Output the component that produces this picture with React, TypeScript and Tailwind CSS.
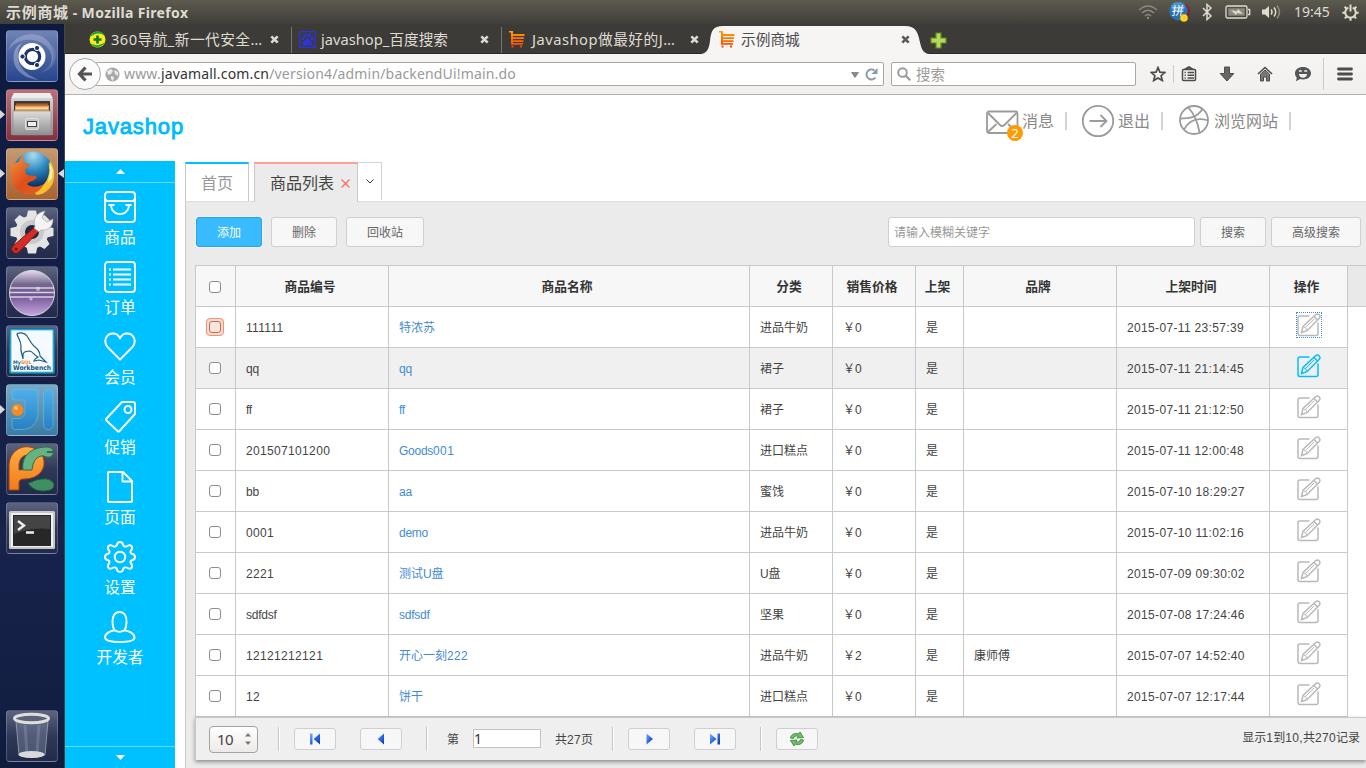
import type { ReactNode } from "react";

const UI = "font-['Noto_Sans','Noto_Sans_CJK_SC',sans-serif]";
const WEB = "font-['Liberation_Sans','Noto_Sans_CJK_SC',sans-serif]";

/* Letters are set a little tighter and digits a little wider than the Chinese beside them. */
function Mixed({ text }: { text: string }) {
  const parts = text.split(/([A-Za-z]+|[\x20-\x40]+)/).filter(Boolean);
  return (
    <>
      {parts.map((p, i) => (
        <span
          key={i}
          className={/^[A-Za-z]/.test(p) ? "tracking-[-0.25px]" : /^[\x20-\x40]/.test(p) ? "tracking-[0.34px]" : ""}
        >
          {p}
        </span>
      ))}
    </>
  );
}

/* ---------- system bar ---------- */

function TopBar() {
  return (
    <div className="flex h-6 shrink-0 items-center justify-between bg-linear-to-b from-[#5d5a4f] to-[#3f3e39] pr-[7px] pl-[6px] text-[#dfdbd2]">
      <span className="text-[15px] leading-6 font-bold whitespace-nowrap">
        <span className="tracking-[0.7px]">示例商城</span>
        <span className="text-[14px] tracking-[0.35px]"> - Mozilla Firefox</span>
      </span>
      <div className="flex items-center">
        <svg width="20" height="16" viewBox="0 0 20 16" fill="none" stroke="#8d8a81" strokeWidth="1.6">
          <path d="M1 6Q10-2 19 6M4 9Q10 3.5 16 9M7 12Q10 9 13 12" />
          <circle cx="10" cy="14" r="1.2" fill="#8d8a81" stroke="none" />
        </svg>
        <svg className="ml-[11px]" width="22" height="22" viewBox="0 0 22 22">
          <circle cx="14" cy="10" r="7" fill="#9a1525" />
          <circle cx="9.5" cy="10" r="9.3" fill="#2872ad" />
          <ellipse cx="9" cy="6" rx="7" ry="5" fill="#4a92c8" />
          <text x="3" y="14.5" fontSize="12" fill="#fff" fontFamily="Noto Sans CJK SC" transform="skewX(-6) translate(1 0)">拼</text>
          <circle cx="15" cy="17" r="3.8" fill="#ffd21f" />
        </svg>
        <svg className="ml-[10px]" width="12" height="18" viewBox="0 0 12 18" fill="none" stroke="#dfdbd2" strokeWidth="1.5">
          <path d="M2 5L10 13L6 16.5V1.5L10 5L2 13" />
        </svg>
        <svg className="ml-3" width="26" height="14" viewBox="0 0 26 14" fill="none" stroke="#dfdbd2" strokeWidth="1.3">
          <rect x="1" y="1" width="21" height="12" rx="1.5" />
          <path d="M23 4.5h1.7v5H23" />
          <rect x="3.3" y="3.3" width="16.4" height="7.4" fill="#8d8a81" stroke="none" />
          <path d="M6 5l6 1.5L13 4l5 5-6-1-1 2z" fill="#dfdbd2" stroke="none" />
        </svg>
        <svg className="ml-[10px]" width="21" height="16" viewBox="0 0 21 16" fill="none" stroke="#dfdbd2" strokeWidth="1.5">
          <path d="M1 5.5h3l4-3.5v12L4 10.500H1z" fill="#dfdbd2" stroke="none" />
          <path d="M10 5.500q2 2.500 0 5M13 3.500q3.500 4.500 0 9" />
          <path d="M16 1.500q5 6.500 0 13" stroke="#8d8a81" />
        </svg>
        <span className="ml-[12px] w-9 text-[14px] leading-6 whitespace-nowrap">19:45</span>
        <svg className="ml-[12px]" width="17" height="17" viewBox="0 0 17 17" fill="none" stroke="#dfdbd2" strokeWidth="2">
          <path d="M6.300 3.600a5.300 5.300 0 1 0 4.400 0" />
          <path d="M8.500 .500v7M.3 8.700h3M13.700 8.700h3M8.500 13.700v3M2.600 2.800L4.600 4.800M14.400 2.800L12.400 4.800M2.800 14.400L5 12.200M14.200 14.400L12 12.200" />
        </svg>
      </div>
    </div>
  );
}

/* ---------- launcher ---------- */

function Tile({ tone, children, left, right }: { tone: string; children: ReactNode; left?: boolean; right?: boolean }) {
  return (
    <div className="relative flex w-full justify-center pr-px">
      {left && (
        <svg className="absolute top-[21px] left-0" width="5" height="9" viewBox="0 0 5 9">
          <path d="M0 0l5 4.500L0 9z" fill="#d8d8d8" />
        </svg>
      )}
      <div className={"flex size-[52px] items-center justify-center rounded-[4px] border border-white/20 " + tone}>
        <svg width="50" height="50" viewBox="0 0 50 50" className="shrink-0">
          {children}
        </svg>
      </div>
      {right && (
        <svg className="absolute top-[21px] right-0" width="6" height="9" viewBox="0 0 6 9">
          <path d="M6 0L0 4.500L6 9z" fill="#d8d8d8" />
        </svg>
      )}
    </div>
  );
}

const glass = "bg-linear-to-b from-[#5d6480] via-[#2f3858] to-[#222b4c]";

function Launcher() {
  return (
    <div className="flex w-[65px] shrink-0 flex-col gap-[7px] border-r border-[#4a4540] bg-linear-to-b from-[#0d1a40] via-[#18234c] via-70% to-[#101c3e] pt-[6px]">
      <Tile tone="bg-linear-to-b from-[#7183b5] to-[#26458c]">
        <path d="M1 20C8 8 28 4 40 16c7 8 5 16 2 22 8-12 5-27-8-33C21 0 5 6 1 20z" fill="#fff" fillOpacity=".22" />
        <path d="M7 22C4 36 14 47 32 49 20 44 10 36 11 24c0-6 2-10 5-12-4 1-8 5-9 10z" fill="#fff" fillOpacity=".3" />
        <path d="M44 12c5 12 0 26-12 30 10-1 18-9 17-18 0-5-2-9-5-12z" fill="#fff" fillOpacity=".12" />
        <circle cx="25" cy="25.500" r="13.500" fill="#fff" />
        <circle cx="25.500" cy="25.500" r="7.200" fill="none" stroke="#1f3566" strokeWidth="3.200" />
        <g fill="#1f3566" stroke="#fff" strokeWidth="1">
          <circle cx="15.500" cy="25.500" r="2.600" />
          <circle cx="30" cy="17" r="2.600" />
          <circle cx="30" cy="34" r="2.600" />
        </g>
      </Tile>
      <Tile left tone="bg-linear-to-b from-[#b8737c] to-[#832f3e]">
        <defs>
          <linearGradient id="cab" x1="0" y1="0" x2="0" y2="1">
            <stop offset="0" stopColor="#dcdcdc" />
            <stop offset="1" stopColor="#8f8f8f" />
          </linearGradient>
        </defs>
        <path d="M7 3h36l3 6v36H4V9z" fill="url(#cab)" />
        <path d="M7 3h36l2.500 5h-41z" fill="#ededed" />
        <rect x="7" y="11" width="36" height="11" fill="#3b3a38" />
        <path d="M9 13.500h32v2H9z" fill="#b75b2b" />
        <path d="M8 15.500h34v6H8z" fill="#ef9c4b" />
        <path d="M9 17.500h32v1.300H9z" fill="#fff4d8" />
        <path d="M6 21h38v24H6z" fill="url(#cab)" stroke="#8a8a8a" strokeWidth=".6" />
        <rect x="18.500" y="28.500" width="13" height="11" rx="1.500" fill="#c6c6c6" stroke="#dedede" />
        <rect x="20.500" y="31.500" width="9" height="5" fill="#eee" stroke="#444" />
      </Tile>
      <Tile left right tone="bg-linear-to-b from-[#c69a72] to-[#a96330]">
        <defs>
          <radialGradient id="globe" cx=".5" cy=".1" r=".8">
            <stop offset="0" stopColor="#a9ddf3" />
            <stop offset=".5" stopColor="#2c87bd" />
            <stop offset="1" stopColor="#0b2f62" />
          </radialGradient>
          <linearGradient id="fox" x1="0" y1="0" x2=".8" y2="1">
            <stop offset="0" stopColor="#f3933a" />
            <stop offset=".6" stopColor="#df4e1b" />
            <stop offset="1" stopColor="#e0601c" />
          </linearGradient>
        </defs>
        <circle cx="26" cy="22" r="19.500" fill="url(#globe)" />
        <path d="M40 9c3 8 3 14 1 19-3 9-10 13-17 13l6 5c9-1 16-8 17-17 1-7-1-13-4-17l0 6z" fill="#f9c22d" />
        <path d="M42 13l1 9-2 12 4-5 1-8z" fill="#fff0a0" />
        <path d="M5 9c0 3 0 5 1 7 2-2 4-3 6-3 0-3 3-6 6-6-2 3-2 5-1 7l6 1c-1 3-5 4-5 6l1 4c3 3 8 0 11 3-2 4-8 4-10 7 4 4 12 3 17 0-4 8-12 12-20 10C9 42 3 33 4 22c0-5 0-9 1-13z" fill="url(#fox)" />
      </Tile>
      <Tile tone={glass}>
        <g fill="#e4e4e4">
          <circle cx="25" cy="24" r="16.500" />
          <path d="M21 2.500h8l1.500 7h-11zM21 45.500h8l1.500-7h-11zM3.500 20v8l7 1.500v-11zM46.500 20v8l-7 1.500v-11zM7.500 12l5-5 7 4-8 8zM37.500 7l5 5-4 7-8-8zM7.500 36l5 5 7-4-8-8zM37.500 41l5-5-4-7-8 8z" />
        </g>
        <circle cx="25" cy="24" r="12" fill="#c9cacc" />
        <circle cx="25" cy="24" r="7" fill="#1e2744" />
        <path d="M29 18l4 4L12 44q-3 3-6 0t0-6z" fill="#d52c25" stroke="#86150f" />
        <path d="M28 18.500c-3-8 2-14 10-15.500l-3 7 5 4 6-3c0 8-5 12-12 11l-2 2-5-4z" fill="#f4f4f4" stroke="#a5a5a5" strokeWidth=".7" />
        <circle cx="9" cy="41" r="1.500" fill="#6e0f0c" />
      </Tile>
      <Tile tone={glass}>
        <defs>
          <linearGradient id="orb" x1="0" y1="0" x2="0" y2="1">
            <stop offset="0" stopColor="#e6dcee" />
            <stop offset=".3" stopColor="#75688f" />
            <stop offset=".55" stopColor="#6f5593" />
            <stop offset="1" stopColor="#c7a6df" />
          </linearGradient>
        </defs>
        <circle cx="25" cy="26" r="22.500" fill="url(#orb)" stroke="#ddd2e5" />
        <path d="M3 21h44M3 25.500h44M3 30h44" stroke="#d8cee2" strokeWidth="1.400" />
        <circle cx="31" cy="22" r="2.200" fill="#fff" fillOpacity=".4" />
        <circle cx="24" cy="32" r="1.600" fill="#fff" fillOpacity=".5" />
      </Tile>
      <Tile tone={glass}>
        <rect x="2" y="2" width="46" height="46" rx="2" fill="#0878a8" />
        <rect x="4" y="4" width="42" height="42" fill="#f4faff" stroke="#57bfe0" />
        <path d="M16 33c-1-6-3-8-2-13 0-5-3-8-4-12 3-2 8-1 10 2 3 5 5 9 8 11 4 3 5 5 5 9l6 6-7-2-5 1c1-3 3-3 4-4-4-2-5-5-8-6-3 0-6 0-7 3z" fill="#fff" stroke="#1b5f88" strokeWidth="1.200" />
        <text x="6" y="37.500" fontSize="4.800" fontWeight="bold" fill="#16628b" fontFamily="DejaVu Sans">My<tspan fill="#ee8b1d">SQL</tspan></text>
        <text x="6" y="43.500" fontSize="6.600" fontWeight="bold" fill="#16527b" textLength="38" lengthAdjust="spacingAndGlyphs" fontFamily="DejaVu Sans">Workbench</text>
      </Tile>
      <Tile left tone="bg-linear-to-b from-[#79a9c5] to-[#3a7ba5]">
        <defs>
          <linearGradient id="ij" x1="0" y1="0" x2="0" y2="1">
            <stop offset="0" stopColor="#4fb0ea" />
            <stop offset="1" stopColor="#2a7fc2" />
          </linearGradient>
        </defs>
        <path d="M5 4.500h26v22c0 12-6 18-17 18H8q-3 0-3-3V33.500h6c5 0 7-3 7-8V15H8q-3 0-3-3z" fill="url(#ij)" stroke="#62c2f0" strokeWidth=".6" />
        <rect x="36.500" y="4.500" width="9.500" height="40" rx="4.500" fill="url(#ij)" stroke="#62c2f0" strokeWidth=".6" />
        <circle cx="10.500" cy="25" r="6" fill="#f58a22" />
        <circle cx="9" cy="23" r="2" fill="#ffc47c" />
      </Tile>
      <Tile tone={glass}>
        <defs>
          <linearGradient id="snake" x1="0" y1="0" x2="0" y2="1">
            <stop offset="0" stopColor="#ffae42" />
            <stop offset="1" stopColor="#f07b1d" />
          </linearGradient>
        </defs>
        <path d="M21 39c5-1 8-4 14-4 6-1 12 2 12 6 0 5-6 6-11 6-7 0-12-3-15-8z" fill="#3f8f60" stroke="#1d5b3d" />
        <path d="M2 46V20C3 9 12 1 23 3c9 2 15 8 14 18-2 10-11 14-20 14-3 0-5 1-5 4v7z" fill="url(#snake)" stroke="#a9400c" />
        <path d="M12 26V20c1-6 4-9 10-9 5 1 6 6 3 10-3 3-7 5-13 5z" fill="#343c55" stroke="#a9400c" />
        <path d="M16 26C14 12 24 3 40 3c8 0 8 8 3 10-4 1-6-2-9-1-6 2-8 6-9 14z" fill="#67b283" stroke="#2c7049" />
        <path d="M40 8h6" stroke="#1d5b3d" strokeWidth="1.600" />
      </Tile>
      <Tile tone={glass}>
        <rect x="2" y="8" width="46" height="38" rx="1.500" fill="#c7c7c7" />
        <rect x="4" y="10" width="42" height="34" fill="#f0f0f0" />
        <rect x="6" y="12" width="38" height="31" fill="#272727" />
        <path d="M7 13h36v13Q25 24 7 31z" fill="#444" />
        <path d="M11 18l6 4.500-6 4.500M19 29.500h8" fill="none" stroke="#eee" strokeWidth="2.400" />
      </Tile>
      <div className="mt-auto mb-[6px]">
        <Tile tone={glass}>
          <path d="M9 10l3 34q13 5 26 0l3-34z" fill="#8892a8" fillOpacity=".4" stroke="#aab0be" strokeWidth=".7" />
          <path d="M18 14l2 29M32 14l-2 29" stroke="#cfd3dc" strokeOpacity=".2" strokeWidth="3" />
          <ellipse cx="24.500" cy="43.500" rx="13" ry="3.500" fill="#d7d9dc" />
          <ellipse cx="24.500" cy="7.500" rx="17" ry="4.200" fill="#5b6379" stroke="#dededc" strokeWidth="3" />
        </Tile>
      </div>
    </div>
  );
}

/* ---------- browser chrome ---------- */

function CartIcon() {
  return (
    <svg width="16" height="17" viewBox="0 0 16 17" className="shrink-0">
      <defs>
        <linearGradient id="cart" x1="0" y1="0" x2="0" y2="1">
          <stop offset="0" stopColor="#ffa200" />
          <stop offset="1" stopColor="#ff3c00" />
        </linearGradient>
      </defs>
      <path d="M0 0h4v3h11.500v2H4v1.300h11v1.700H4v1.300h10.500V11H4v1h10v1.800H2V1.600H0zM2.500 14.500h2v2h-2zM11 14.500h2v2h-2z" fill="url(#cart)" />
    </svg>
  );
}

function CloseX({ color }: { color: string }) {
  return (
    <svg width="9" height="9" viewBox="0 0 9 9" className="shrink-0">
      <path d="M1.300 1.300l6.400 6.400M7.700 1.300L1.300 7.700" stroke={color} strokeWidth="2.600" />
    </svg>
  );
}

function BrowserTab({ icon, label, width, track }: { icon: ReactNode; label: string; width: string; track: string }) {
  return (
    <div className={"flex h-[30px] items-center pr-3 " + width}>
      {icon}
      <span className={"ml-[5px] flex-1 leading-[30px] whitespace-nowrap text-[#dfdbd2] " + track}>{label}</span>
      <CloseX color="#dcd9d1" />
    </div>
  );
}

function TabStrip() {
  return (
    <div className="flex h-[30px] shrink-0 border-b border-[#2a2926] bg-[#3c3b37]">
      <BrowserTab
        width="w-[226px] pl-6"
        track="text-[14.7px] tracking-[0.45px]"
        label="360导航_新一代安全…"
        icon={
          <svg width="17" height="17" viewBox="0 0 17 17" className="shrink-0">
            <circle cx="8.500" cy="8.500" r="8" fill="#f9ea1d" />
            <path d="M1 6C4-1 13-1 16 5 11 1 6 2 1 6zM16 11c-3 6-11 7-15 1 5 3 10 3 15-1z" fill="#16a536" />
            <path d="M8.500 4.500v8M4.500 8.500h8" stroke="#127322" strokeWidth="2.600" />
          </svg>
        }
      />
      <div className="mt-[3px] h-[26px] w-px bg-[#75736a]" />
      <BrowserTab
        width="w-[209px] pl-[7px]"
        track="text-[14.7px]"
        label="javashop_百度搜索"
        icon={
          <svg width="17" height="17" viewBox="0 0 17 17" className="shrink-0" fill="#2b34dd">
            <rect x=".7" y=".7" width="15.600" height="15.600" fill="none" stroke="#2b34dd" strokeWidth="1.300" />
            <ellipse cx="4" cy="7.500" rx="1.400" ry="1.900" />
            <ellipse cx="6.700" cy="4.500" rx="1.400" ry="2" />
            <ellipse cx="10.300" cy="4.500" rx="1.400" ry="2" />
            <ellipse cx="13" cy="7.500" rx="1.400" ry="1.900" />
            <path d="M8.500 7.500c2 0 2.500 2 4 3.200s1 3.800-1 3.800-2-.5-3-.5-1 .5-3 .5-2.500-2.600-1-3.800 2-3.200 4-3.200z" />
          </svg>
        }
      />
      <div className="mt-[3px] h-[26px] w-px bg-[#75736a]" />
      <BrowserTab width="w-[209px] pl-[7px]" track="pl-[2px] text-[14.7px] tracking-[0.5px]" label="Javashop做最好的J…" icon={<CartIcon />} />
      <div className="relative -ml-[10px] flex h-[30px] w-[229px] shrink-0 items-center pr-[20px] pl-[18px]">
        <svg className="absolute inset-0" width="229" height="30" viewBox="0 0 229 30">
          <path d="M0 30C6 29 8 25 9 17 10 7 12 2 22 2H204C214 2 216 7 218 14 220 23 221 30 229 30z" fill="#f6f5f4" />
        </svg>
        <div className="relative flex flex-1 items-center">
          <CartIcon />
          <span className="ml-[6px] flex-1 text-[14.7px] leading-[30px] text-[#4c4c4c]">示例商城</span>
          <CloseX color="#5d5b57" />
        </div>
      </div>
      <svg className="mt-2" width="17" height="17" viewBox="0 0 17 17">
        <path d="M6 1h5v5h5v5h-5v5H6v-5H1V6h5z" fill="#b6d757" stroke="#618b24" strokeWidth="1.200" />
      </svg>
    </div>
  );
}

function NavBar() {
  return (
    <div className="flex h-[41px] shrink-0 items-center border-b border-[#b2b0ab] bg-linear-to-b from-[#f6f5f4] to-[#f1f0ee] pl-1 text-[15px] text-[#9a9a9a]">
      <div className="z-10 flex size-8 shrink-0 items-center justify-center rounded-full border border-[#a1a8ad] bg-[#fbfbfb]">
        <svg width="16" height="16" viewBox="0 0 16 16" fill="none" stroke="#545454" strokeWidth="3.200">
          <path d="M8.500 1.500L2.500 8l6 6.500M3 8h12" />
        </svg>
      </div>
      <div className="-ml-[6px] flex h-6 w-[789px] items-center rounded-[2px] border border-[#a9a8a4] bg-white pr-[5px] pl-[9px]">
        <svg width="15" height="15" viewBox="0 0 15 15" className="shrink-0">
          <circle cx="7.500" cy="7.500" r="7" fill="#a8a8a8" />
          <path d="M2 4l4-2 2 2-2 3-3 1zM9 3l4 2v4l-3-2zM6 9l3 1-1 4-2-2z" fill="#ececec" />
        </svg>
        <span className="ml-[4px] flex-1 text-[14px] leading-[22px] tracking-[0.17px] whitespace-nowrap">
          www.<span className="text-[#333]">javamall.com.cn</span>/version4/admin/backendUi!main.do
        </span>
        <svg className="mt-[2px]" width="8" height="6" viewBox="0 0 8 6"><path d="M.5.5h7L4 5.500z" fill="#8b8b8b" stroke="#666" strokeWidth=".6" /></svg>
        <svg className="ml-[6px]" width="13" height="13" viewBox="0 0 13 13">
          <path d="M10.500 9.500A5 5 0 1 1 9.500 2.500" fill="none" stroke="#8a99a7" strokeWidth="2" />
          <path d="M12.500 0v6H6.500z" fill="#8a99a7" />
        </svg>
      </div>
      <div className="ml-[7px] flex h-6 w-[245px] items-center rounded-[2px] border border-[#a9a8a4] bg-white pl-[5px]">
        <svg width="14" height="14" viewBox="0 0 14 14" fill="none" stroke="#999" strokeWidth="1.900">
          <circle cx="5.500" cy="5.500" r="4.300" />
          <path d="M8.500 8.500l4.800 4.800" strokeWidth="2.200" />
        </svg>
        <span className="ml-[5px] text-[14.500px] leading-[22px]">搜索</span>
      </div>
      <svg className="ml-[14px]" width="16" height="16" viewBox="0 0 16 16" fill="none" stroke="#4c4c4c" strokeWidth="1.700">
        <path d="M8 1.500l1.900 4.600 4.900.4-3.700 3.200 1.200 4.800L8 11.900l-4.300 2.600 1.200-4.800L1.200 6.500l4.900-.4z" />
      </svg>
      <div className="mx-[7px] h-[18px] w-px bg-[#c9ccd0]" />
      <svg width="16" height="16" viewBox="0 0 16 16" fill="none" stroke="#4c4c4c" strokeWidth="1.500">
        <rect x="1.500" y="3.500" width="13" height="11" rx="1" />
        <path d="M4.500 3L8 .8 11.500 3zM3.500 6.500h1.300M3.500 9.200h1.300M3.500 12h1.300M6.500 6.500h6.500M6.500 9.200h6.500M6.500 12h6.500" />
      </svg>
      <svg className="ml-[22px]" width="16" height="16" viewBox="0 0 16 16"><path d="M5.500 1h5v6.500h4.300L8 15 1.200 7.500h4.300z" fill="#666" stroke="#4c4c4c" /></svg>
      <svg className="ml-[22px]" width="16" height="16" viewBox="0 0 16 16">
        <path d="M1 8L8 1.500 15 8" fill="none" stroke="#4c4c4c" strokeWidth="1.600" />
        <path d="M3.500 8.200L8 4l4.500 4.200V15h-3v-4h-3v4h-3z" fill="#777" stroke="#4c4c4c" />
      </svg>
      <svg className="ml-[21px]" width="18" height="16" viewBox="0 0 18 16">
        <path d="M9 1c4.600 0 8 2.700 8 6.200s-3.400 6.200-8 6.200c-1 0-2-.1-2.800-.4L2 15.200l.8-3.500C1.600 10.500 1 9 1 7.200 1 3.700 4.400 1 9 1z" fill="#555" />
        <path d="M4.800 8h8.400q-.6 3.700-4.200 3.700T4.800 8z" fill="#eee" />
        <path d="M5 5.500q1.300-1.500 2.600 0M10.400 5.500q1.300-1.500 2.600 0" stroke="#eee" fill="none" strokeWidth="1.300" />
      </svg>
      <div className="ml-[11px] h-8 w-px bg-[#c9ccd0]" />
      <svg className="ml-[13px]" width="16" height="14" viewBox="0 0 16 14"><path d="M1.500 2h13M1.500 7h13M1.500 12h13" stroke="#4c4c4c" strokeWidth="2.800" strokeLinecap="round" /></svg>
    </div>
  );
}

/* ---------- page ---------- */

function PageHeader() {
  return (
    <div className="flex h-[66px] shrink-0 items-start bg-white pt-[9px] text-[16px] text-[#888]">
      <span className="mt-[7px] ml-[18px] w-[102px] text-[22px] leading-8 tracking-[0.85px] text-[#00bbfd] [-webkit-text-stroke:0.9px_#00bbfd]">Javashop</span>
      <div className="relative ml-[801px] h-9 w-[33px] pt-[6px]">
        <svg width="33" height="25" viewBox="0 0 33 25" fill="none" stroke="#9b9b9b" strokeWidth="1.800">
          <rect x="1" y="1.500" width="30.500" height="21.500" rx="2" />
          <path d="M2 3L14 15q2.200 2 4.400 0L30.500 3M2 22l8.500-8M30.500 22L22 14" />
        </svg>
        <span className="absolute top-[21px] left-[21px] flex size-4 items-center justify-center rounded-full bg-[#ff9b00] pt-px font-['Noto_Sans'] text-[13px] leading-none text-white">2</span>
      </div>
      <span className="ml-[3px] w-8 leading-[36px]">消息</span>
      <div className="mt-[8px] ml-[11px] h-[18px] w-[2px] bg-[#d4d4d4]" />
      <svg className="ml-[14px]" width="34" height="34" viewBox="0 0 34 34" fill="none" stroke="#9b9b9b" strokeWidth="1.800">
        <circle cx="17" cy="17" r="15.200" />
        <path d="M8.500 17h16.500M19.500 11l6 6-6 6" />
      </svg>
      <span className="ml-[3px] w-8 leading-[36px]">退出</span>
      <div className="mt-[8px] ml-[11px] h-[18px] w-[2px] bg-[#d4d4d4]" />
      <svg className="ml-[15px]" width="32" height="32" viewBox="0 0 32 32" fill="none" stroke="#9b9b9b" strokeWidth="1.800">
        <circle cx="16" cy="16" r="14" />
        <path d="M10.500 3.500C17 11 20 19 21.500 28.500M2 14.500c10 0 17-1 22.500-9.500M6 25.500c5-9 13-12.500 24-9" />
      </svg>
      <span className="ml-[4px] w-16 leading-[36px]">浏览网站</span>
      <div className="mt-[8px] ml-[11px] h-[18px] w-[2px] bg-[#d4d4d4]" />
    </div>
  );
}

const menu: { label: string; icon: ReactNode }[] = [
  {
    label: "商品",
    icon: (
      <>
        <rect x="1" y="1" width="30" height="30" rx="3" />
        <path d="M1 7q0 3 3 3h24q3 0 3-3M4.500 14h6M21.500 14h6M7 14.500c1 11.500 17 11.500 18 0" />
      </>
    ),
  },
  {
    label: "订单",
    icon: (
      <>
        <rect x="1" y="1" width="30" height="30" rx="3" />
        <path d="M9 8.500h18M9 13.500h18M9 18.500h18M9 23.500h18M5 8.500h2M5 13.500h2M5 18.500h2M5 23.500h2" strokeWidth="2" />
      </>
    ),
  },
  { label: "会员", icon: <path d="M16 28.500L3.500 16C-1 10.500 2 2.500 9 2.500c3.500 0 6 2.500 7 5 1-2.500 3.500-5 7-5 7 0 10 8 5.500 13.500z" /> },
  {
    label: "促销",
    icon: (
      <>
        <path d="M18 1h11q2 0 2 2v10L15.500 30q-1 1-2 0L2.500 19.500q-1-1 0-2z" />
        <circle cx="24" cy="8.500" r="3.500" />
      </>
    ),
  },
  { label: "页面", icon: <path d="M4 2q0-1 1-1h14l9 9v20q0 1-1 1H5q-1 0-1-1zM18.500 1v9.500H28" /> },
  {
    label: "设置",
    icon: (
      <>
        <circle cx="16" cy="16" r="5.300" />
        <path d="M12.700 4.500C13 2 14 1 16 1s3 1 3.300 3.500q1.700 1.800 3.600.7c2-1.200 3.500-1.200 4.600 0s1 2.600-.7 4.600q-1 1.900.9 2.900C30 13 31 14 31 16s-1 3-3.300 3.300q-1.900 1-.9 2.900c1.700 2 1.700 3.400.7 4.600s-2.600 1.200-4.600 0q-1.900-1.100-3.600.7C19 30 18 31 16 31s-3-1-3.300-3.500q-1.700-1.800-3.600-.7c-2 1.200-3.500 1.200-4.600 0s-1-2.600.7-4.600q1-1.900-.9-2.900C2 19 1 18 1 16s1-3 3.300-3.300q1.900-1 .9-2.900C3.500 7.800 3.500 6.400 4.500 5.200s2.600-1.200 4.600 0q1.900 1.100 3.600-.7z" />
      </>
    ),
  },
  { label: "开发者", icon: <path d="M10.700 19.300C8.500 17 8.500 13 8.500 10c0-5 2.500-9 7-9s7 4 7 9c0 3 0 7-2.200 9.300M10.700 19.300Q15.500 22.500 20.300 19.300C25 20 30.500 22.500 30.500 26.500c0 3-6 4.500-15 4.500s-14.500-1.500-14.500-4.500c0-4 5-6.500 9.700-7.200z" /> },
];

function SideMenu() {
  return (
    <div className="flex w-[110px] shrink-0 flex-col bg-[#00c1ff] text-white">
      <div className="flex h-[22px] items-center justify-center border-b border-[#66d9ff]">
        <svg width="9" height="5" viewBox="0 0 9 5"><path d="M0 5L4.500 0 9 5z" fill="#fff" /></svg>
      </div>
      <div className="flex-1">
        {menu.map((m) => (
          <div key={m.label} className="flex h-[70px] flex-col items-center pt-2">
            <svg width="32" height="32" viewBox="0 0 32 32" fill="none" stroke="#fff" strokeWidth="1.900" strokeLinejoin="round">
              {m.icon}
            </svg>
            <span className="text-[15.700px] leading-[30px]">{m.label}</span>
          </div>
        ))}
      </div>
      <div className="flex h-[22px] items-center justify-center border-t border-[#66d9ff]">
        <svg width="9" height="5" viewBox="0 0 9 5"><path d="M0 0h9L4.500 5z" fill="#fff" /></svg>
      </div>
    </div>
  );
}

function PageTabs() {
  return (
    <div className="flex h-[41px] shrink-0 items-start border-b border-[#dcdcdc] bg-white pt-px text-[16px]">
      <div className="h-[39px] w-16 border-x border-t-2 border-x-[#c9c9c9] border-t-[#00c0ff] bg-white pl-[15px] leading-[40px] text-[#999]">首页</div>
      <div className="ml-[5px] flex h-[40px] w-[104px] items-center border-x border-t-2 border-x-[#c9c9c9] border-t-[#ff9d96] bg-[#ebebeb] pl-[15px] text-[#444]">
        <span className="pt-px leading-[38px]">商品列表</span>
        <svg className="ml-[7px]" width="9" height="9" viewBox="0 0 9 9"><path d="M.5.5l8 8M8.500.5l-8 8" stroke="#ff6a62" strokeWidth="1.200" /></svg>
      </div>
      <div className="flex h-[38px] w-6 items-center justify-center border-t border-r border-[#d4d4d4]">
        <svg width="8" height="5" viewBox="0 0 8 5"><path d="M.5.5L4 4 7.500.5" stroke="#333" fill="none" /></svg>
      </div>
    </div>
  );
}

const btn = "flex h-[30px] items-center justify-center rounded-[3px] border border-[#cfcfcf] bg-[#f7f7f7] pt-[2px] text-[12px] text-[#666]";

function Toolbar() {
  return (
    <div className="flex h-[63px] shrink-0 items-start pt-[15px] pr-[5px] pl-[10px]">
      <button className="flex h-[30px] w-[66px] items-center justify-center rounded-[3px] border border-[#2a9df4] bg-[#38bbff] pt-[2px] text-[12px] text-white outline-1 outline-dotted outline-white">添加</button>
      <button className={btn + " ml-[9px] w-[66px]"}>删除</button>
      <button className={btn + " ml-[9px] w-[78px]"}>回收站</button>
      <div className="ml-auto flex h-[30px] w-[307px] items-center rounded-[3px] border border-[#cfcfcf] bg-white pt-[2px] pl-[5px] text-[12px] text-[#999]">请输入模糊关键字</div>
      <button className={btn + " ml-[5px] w-[66px]"}>搜索</button>
      <button className={btn + " ml-[5px] w-[90px]"}>高级搜索</button>
    </div>
  );
}

const columns = "grid grid-cols-[40px_153px_361px_83px_83px_48px_153px_153px_78px]";
const headings = ["商品编号", "商品名称", "分类", "销售价格", "上架", "品牌", "上架时间", "操作"];
const rows = [
  ["111111", "特浓苏", "进品牛奶", "￥0", "", "2015-07-11 23:57:39"],
  ["qq", "qq", "裙子", "￥0", "", "2015-07-11 21:14:45"],
  ["ff", "ff", "裙子", "￥0", "", "2015-07-11 21:12:50"],
  ["201507101200", "Goods001", "进口糕点", "￥0", "", "2015-07-11 12:00:48"],
  ["bb", "aa", "蜜饯", "￥0", "", "2015-07-10 18:29:27"],
  ["0001", "demo", "进品牛奶", "￥0", "", "2015-07-10 11:02:16"],
  ["2221", "测试U盘", "U盘", "￥0", "", "2015-07-09 09:30:02"],
  ["sdfdsf", "sdfsdf", "坚果", "￥0", "", "2015-07-08 17:24:46"],
  ["12121212121", "开心一刻222", "进品牛奶", "￥2", "康师傅", "2015-07-07 14:52:40"],
  ["12", "饼干", "进口糕点", "￥0", "", "2015-07-07 12:17:44"],
];

function Check({ hot }: { hot?: boolean }) {
  return hot ? (
    <span className="flex size-[18px] items-center justify-center rounded-[4px] border border-[#f0936c] bg-[#fcd9cb]">
      <span className="size-3 rounded-[3px] border border-[#a0796b] bg-[#fde4da]" />
    </span>
  ) : (
    <span className="size-3 rounded-[3px] border border-[#8e8d88] bg-white" />
  );
}

function EditIcon({ color }: { color: string }) {
  return (
    <svg width="24" height="24" viewBox="0 0 24 24" fill="none" stroke={color} strokeWidth="1.500">
      <path d="M12.500 3H3Q1 3 1 5v15.500q0 2 2 2h16q2 0 2-2v-11" />
      <path d="M4.500 19.500l1.500-6L18.500 1.800q2-1.600 3.600 0t.2 3.500L10 17.700zM17 3.500l3.500 3.500" />
      <path d="M7 14q2.500 .500 3 3M8.500 14.500L17 6" strokeWidth="1" />
    </svg>
  );
}

function Grid() {
  return (
    <div className="flex min-h-0 shrink-0 flex-col border-t border-l border-[#c9c9c9] text-[12px] text-[#444]">
      <div className="flex h-[41px] border-b border-[#c9c9c9] bg-[#e9e9e9]">
        <div className={columns + " bg-[#f7f7f7]"}>
          <div className="flex items-center justify-center border-r border-[#c9c9c9] pt-[2px] pr-[2px]"><Check /></div>
          {headings.map((h) => (
            <div key={h} className="flex items-center justify-center border-r border-[#c9c9c9] pt-[2px] pr-[4px] text-[12.750px] font-bold whitespace-nowrap text-[#333]">{h}</div>
          ))}
        </div>
      </div>
      <div className="bg-white">
        {rows.map((r, i) => {
          const cell = "flex items-center border-r border-b border-[#c9c9c9] pt-px pl-[10px] whitespace-nowrap";
          return (
            <div key={i} className={columns + " h-[41px] w-[1152px] " + (i === 1 ? "bg-[#f0f0f0]" : "bg-white")}>
              <div className="flex items-center justify-center border-r border-b border-[#c9c9c9] pr-[2px]"><Check hot={i === 0} /></div>
              <div className={cell}><Mixed text={r[0]} /></div>
              <div className={cell + " text-[#428bd6]"}><Mixed text={r[1]} /></div>
              <div className={cell}><Mixed text={r[2]} /></div>
              <div className={cell}><Mixed text={r[3]} /></div>
              <div className={cell}>是</div>
              <div className={cell}><Mixed text={r[4]} /></div>
              <div className={cell}><Mixed text={r[5]} /></div>
              <div className="flex items-start justify-center border-r border-b border-[#c9c9c9] pt-[6px]">
                <span className={i === 0 ? "-m-px border border-dotted border-[#428bd6]" : ""}>
                  <EditIcon color={i === 1 ? "#00bfff" : "#b9b9b9"} />
                </span>
              </div>
            </div>
          );
        })}
      </div>
    </div>
  );
}

function PageButton({ children, gap }: { children: ReactNode; gap: string }) {
  return (
    <button className={"flex h-[22px] w-[42px] items-center justify-center rounded-[3px] border border-[#cfcfcf] bg-[#f7f7f7] " + gap}>
      <svg width="16" height="16" viewBox="0 0 16 16">
        <defs>
          <linearGradient id="blue" x1="0" y1="0" x2="1" y2="1">
            <stop offset="0" stopColor="#7ab0ff" />
            <stop offset=".5" stopColor="#2a68e8" />
            <stop offset="1" stopColor="#1138a8" />
          </linearGradient>
        </defs>
        {children}
      </svg>
    </button>
  );
}

function Pager() {
  const sep = "h-6 w-px bg-[#c6c6c6] shadow-[1px_0_0_#fff]";
  return (
    <div className="flex h-[43px] shrink-0 items-center border-t border-l border-[#c9c9c9] bg-[#efefef] pr-[6px] pl-[13px] text-[12px] text-[#444] shadow-[0_2px_4px_rgba(0,0,0,0.4)]">
      <div className={"flex h-[27px] w-[49px] items-center rounded-[4px] border border-[#a6a39d] bg-linear-to-b from-white to-[#eceae8] pl-[7px] text-[15px] tracking-[-0.5px] text-[#444] " + UI}>
        10
        <svg className="ml-[12px]" width="6" height="12" viewBox="0 0 6 12"><path d="M0 3.500L3 0l3 3.500zM0 8.500h6L3 12z" fill="#777" /></svg>
      </div>
      <div className={sep + " ml-5"} />
      <PageButton gap="ml-[15px]">
        <path d="M3 2.500h2.500v11H3zM13 2.500v11L6.500 8z" fill="url(#blue)" />
      </PageButton>
      <PageButton gap="ml-6">
        <path d="M11 2.500v11L4.500 8z" fill="url(#blue)" />
      </PageButton>
      <div className={sep + " ml-6"} />
      <span className="ml-5 pt-px">第</span>
      <div className={"mb-[2px] ml-[14px] h-[19px] w-[68px] border border-[#c4c4c4] bg-white text-[14px] leading-[17px] text-[#333] " + UI}>1</div>
      <span className="ml-[14px] w-[37px] pt-px whitespace-nowrap"><Mixed text="共27页" /></span>
      <div className={sep + " ml-5"} />
      <PageButton gap="ml-[15px]">
        <path d="M5.500 2.500v11L12 8z" fill="url(#blue)" />
      </PageButton>
      <PageButton gap="ml-6">
        <path d="M3 2.500v11L9.500 8zM10.500 2.500H13v11h-2.500z" fill="url(#blue)" />
      </PageButton>
      <div className={sep + " ml-6"} />
      <PageButton gap="ml-[15px]">
        <g fill="#72bf66" stroke="#2f8238" strokeWidth=".8" strokeLinejoin="round">
          <path d="M1.500 7C2 3.500 5.500 1.500 9.500 3L11 1l3.500 5.500L8 7l1.200-1.800C6.500 4.500 5 5.500 4.500 7.500z" />
          <path d="M14.500 9c-.5 3.500-4 5.500-8 4L5 15 1.500 9.500 8 9l-1.200 1.800c2.700.7 4.200-.3 4.700-2.300z" />
        </g>
      </PageButton>
      <span className="ml-auto pb-[3px] whitespace-nowrap"><Mixed text="显示1到10,共270记录" /></span>
    </div>
  );
}

export default function App() {
  return (
    <div className={"flex h-[768px] w-[1366px] flex-col overflow-hidden bg-white " + UI}>
      <TopBar />
      <div className="flex min-h-0 flex-1">
        <Launcher />
        <div className="flex min-w-0 flex-1 flex-col">
          <TabStrip />
          <NavBar />
          <div className={"flex min-h-0 flex-1 flex-col " + WEB}>
            <PageHeader />
            <div className="flex min-h-0 flex-1">
              <SideMenu />
              <div className="ml-[10px] flex min-w-0 flex-1 flex-col">
                <PageTabs />
                <div className="flex min-h-0 flex-1 flex-col border-l border-[#c9c9c9] bg-[#ebebeb]">
                  <Toolbar />
                  <div className="ml-[9px] flex flex-col">
                    <Grid />
                    <Pager />
                  </div>
                </div>
              </div>
            </div>
          </div>
        </div>
      </div>
    </div>
  );
}
